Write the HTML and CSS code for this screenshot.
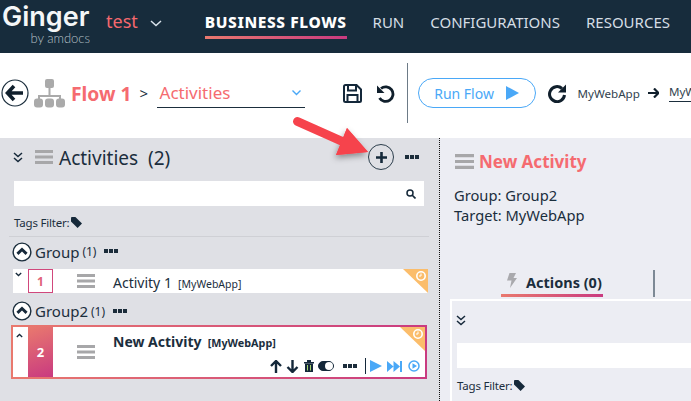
FILE: index.html
```html
<!DOCTYPE html>
<html lang="en">
<head>
<meta charset="utf-8">
<title>Ginger</title>
<link rel="stylesheet" href="styles.css">
</head>
<body>
<svg class="defs" width="0" height="0" aria-hidden="true">
  <defs>
    <symbol id="burger" viewBox="0 0 18 14"><path d="M0 0h18v3H0zM0 5.5h18v3H0zM0 11h18v3H0z" fill="#a7a7a9"/></symbol>
    <symbol id="dchev" viewBox="0 0 10 11"><path d="M1 1l4 3.500L9 1M1 6l4 3.500L9 6" fill="none" stroke="#16293a" stroke-width="1.500"/></symbol>
    <symbol id="dots" viewBox="0 0 14 5"><path d="M0 0h4v4H0zM5 0h4v4H5zM10 0h4v4h-4z" fill="#1c2d3b"/></symbol>
    <symbol id="tag" viewBox="0 0 11 11"><path d="M0 1.200C0 .5.5 0 1.200 0h3.200L11 6.600 6.600 11 0 4.400z" fill="#16293a"/></symbol>
    <symbol id="up" viewBox="0 0 14 14"><circle cx="7" cy="7" r="6.200" fill="#fff" stroke="#1b2e3d" stroke-width="1"/><path d="M3.800 8.300L7 5.200l3.200 3.100" fill="none" stroke="#16293a" stroke-width="2"/></symbol>
    <symbol id="corner" viewBox="0 0 25 24"><path d="M0 0h25v24z" fill="#fbbd6b"/><circle cx="18" cy="7" r="4.200" fill="none" stroke="#fff" stroke-width="1.600"/><path d="M18 4.500V7h-2" fill="none" stroke="#fff"/></symbol>
  </defs>
</svg>
<div class="page">
  <header class="topbar">
    <div class="logo">
      <span class="logo-name">Ginger</span>
      <span class="logo-by">by amdocs</span>
    </div>
    <span class="project">test</span>
    <svg class="project-chev" width="12" height="7" viewBox="0 0 12 7"><path d="M1 1l5 4.500L11 1" fill="none" stroke="#d8e2ea" stroke-width="1.500"/></svg>
    <nav class="nav">
      <a class="nav-item nav-active">BUSINESS FLOWS</a>
      <a class="nav-item">RUN</a>
      <a class="nav-item">CONFIGURATIONS</a>
      <a class="nav-item">RESOURCES</a>
    </nav>
  </header>

  <section class="toolbar">
    <svg class="back" width="28" height="28" viewBox="0 0 28 28"><circle cx="14" cy="14" r="13" fill="#fff" stroke="#1b2e3d" stroke-width="1.200"/><path d="M13 7l-6.500 7 6.500 7M7 14h15" fill="none" stroke="#101f2c" stroke-width="3.600"/></svg>
    <svg class="tree" width="33" height="29" viewBox="0 0 33 29"><path d="M16.500 8v8M6 22v-5h21v5" fill="none" stroke="#aaa" stroke-width="2"/><rect x="12" y="0" width="9" height="9" rx="2" fill="#aaa"/><rect x="1" y="19.500" width="9" height="9" rx="3" fill="#aaa"/><rect x="12" y="19.500" width="9" height="9" rx="3" fill="#aaa"/><rect x="23" y="19.500" width="9" height="9" rx="3" fill="#aaa"/></svg>
    <span class="flow-name">Flow 1</span>
    <span class="crumb">&gt;</span>
    <div class="view-select">
      <span>Activities</span>
      <svg width="9" height="6" viewBox="0 0 9 6"><path d="M.5.500l4 4 4-4" fill="none" stroke="#4aa8f7" stroke-width="1.400"/></svg>
    </div>
    <svg class="save" width="19" height="19" viewBox="0 0 19 19"><path d="M1 2.500C1 1.700 1.700 1 2.500 1h11L18 5.500v11c0 .8-.7 1.500-1.500 1.500h-14C1.700 18 1 17.300 1 16.500z" fill="none" stroke="#14283a" stroke-width="2"/><path d="M5 1.500v5h8v-5M4.500 18v-7h10v7" fill="none" stroke="#14283a" stroke-width="2"/></svg>
    <svg class="undo" width="19" height="19" viewBox="0 0 19 19"><path d="M5 4.500A7.300 7.300 0 1 1 3.500 14" fill="none" stroke="#101f2c" stroke-width="2.800"/><path d="M1 1.500v7.500h7.500z" fill="#101f2c"/></svg>
    <div class="tool-sep"></div>
    <button class="run-btn">Run Flow<svg width="13" height="14" viewBox="0 0 13 14"><path d="M0 0l13 7-13 7z" fill="#4aa8f7"/></svg></button>
    <svg class="redo" width="20" height="20" viewBox="0 0 20 20"><path d="M15 5.500A7.500 7.500 0 1 0 17.500 12" fill="none" stroke="#101f2c" stroke-width="3"/><path d="M19 1.500v8h-8z" fill="#101f2c"/></svg>
    <span class="env">MyWebApp</span>
    <svg class="env-arrow" width="11" height="10" viewBox="0 0 11 10"><path d="M6 .500L10.500 5 6 9.500M0 5h10" fill="none" stroke="#101f2c" stroke-width="2.200"/></svg>
    <span class="env-target">MyWebApp</span>
  </section>

  <main class="workspace">
    <section class="left">
      <div class="left-head">
        <svg class="head-chev" width="10" height="11"><use href="#dchev"/></svg>
        <svg class="head-burger" width="18" height="14"><use href="#burger"/></svg>
        <h1 class="left-title">Activities&nbsp; (2)</h1>
        <button class="add-btn"><svg width="13" height="13" viewBox="0 0 13 13"><path d="M6.500 1v11M1 6.500h11" stroke="#15293a" stroke-width="2.600"/></svg></button>
        <svg class="head-dots" width="14" height="5"><use href="#dots"/></svg>
      </div>
      <div class="search">
        <svg width="10" height="10" viewBox="0 0 10 10"><circle cx="4" cy="4" r="3" fill="none" stroke="#16293a" stroke-width="1.500"/><path d="M6 6l3.500 3.500" stroke="#16293a" stroke-width="1.700"/></svg>
      </div>
      <div class="tags">Tags Filter:<svg width="11" height="11"><use href="#tag"/></svg></div>
      <div class="group-list">
        <div class="group-head group-first">
          <svg width="20" height="20" viewBox="0 0 14 14"><use href="#up"/></svg>
          <span class="group-name">Group</span><span class="group-count">(1)</span>
          <svg class="group-dots" width="14" height="5"><use href="#dots"/></svg>
        </div>
        <article class="activity">
          <svg class="row-chev" width="7" height="5" viewBox="0 0 7 5"><path d="M.8 1l2.700 2.500L6.200 1" fill="none" stroke="#16293a" stroke-width="1.300"/></svg>
          <div class="num">1</div>
          <svg class="row-burger" width="18" height="14"><use href="#burger"/></svg>
          <div class="row-title"><span class="act-name">Activity 1</span> <span class="act-target">[MyWebApp]</span></div>
          <svg class="corner" width="25" height="24"><use href="#corner"/></svg>
        </article>
        <div class="group-head group-second">
          <svg width="20" height="20" viewBox="0 0 14 14"><use href="#up"/></svg>
          <span class="group-name">Group2</span><span class="group-count">(1)</span>
          <svg class="group-dots" width="14" height="5"><use href="#dots"/></svg>
        </div>
        <article class="activity-sel">
          <div class="sel-inner">
            <svg class="sel-chev" width="7" height="5" viewBox="0 0 7 5"><path d="M.8 4l2.700-2.500L6.200 4" fill="none" stroke="#16293a" stroke-width="1.300"/></svg>
            <div class="num-sel">2</div>
            <svg class="sel-burger" width="18" height="14"><use href="#burger"/></svg>
            <div class="sel-body">
              <div class="sel-title"><span class="sel-name">New Activity</span> <span class="sel-target">[MyWebApp]</span></div>
              <div class="sel-tools">
                <svg width="12" height="13" viewBox="0 0 12 13"><path d="M1 6l5-5 5 5M6 2v11" fill="none" stroke="#14283a" stroke-width="2.400"/></svg>
                <svg width="13" height="13" viewBox="0 0 13 13"><path d="M1.500 7l5 5 5-5M6.500 11V0" fill="none" stroke="#14283a" stroke-width="2.400"/></svg>
                <svg class="tool-trash" width="10" height="12" viewBox="0 0 10 12"><path d="M0 2h10v1.500H0zM3 0h4v2H3z" fill="#14283a"/><path d="M1 3.500h8V12H1z" fill="#14283a"/><path d="M3 5h1v5.500H3zM6 5h1v5.500H6z" fill="#a5d36f"/></svg>
                <svg width="16" height="10" viewBox="0 0 16 10"><rect x=".5" y=".5" width="15" height="9" rx="4.500" fill="#14283a" stroke="#14283a"/><circle cx="11" cy="5" r="4" fill="#fff"/></svg>
                <svg class="tool-dots" width="14" height="5"><use href="#dots"/></svg>
                <span class="tool-bar"></span>
                <svg width="12" height="12" viewBox="0 0 12 12"><path d="M0 0l12 6-12 6z" fill="#4aa8f7"/></svg>
                <svg class="tool-ff" width="15" height="11" viewBox="0 0 15 11"><path d="M0 0l6.500 5.500L0 11zM6.500 0L13 5.500 6.500 11zM13 0h2v11h-2z" fill="#4aa8f7"/></svg>
                <svg class="tool-cplay" width="12" height="12" viewBox="0 0 12 12"><circle cx="6" cy="6" r="5" fill="none" stroke="#4aa8f7" stroke-width="1.500"/><path d="M4.500 3.200L9 6l-4.500 2.800z" fill="#4aa8f7"/></svg>
              </div>
            </div>
            <svg class="corner corner-sel" width="25" height="24"><use href="#corner"/></svg>
          </div>
        </article>
      </div>
    </section>
    <section class="right">
      <div class="right-head">
        <svg width="19" height="15" viewBox="0 0 18 14"><use href="#burger"/></svg>
        <h2 class="right-title">New Activity</h2>
      </div>
      <p class="meta">Group: Group2<br>Target: MyWebApp</p>
      <div class="tabs">
        <div class="tab">
          <svg width="10" height="15" viewBox="0 0 10 15"><path d="M2.500 0H9L6.500 5H10L3 15l1.500-7.500H0z" fill="#a9a9ad"/></svg>
          <span>Actions (0)</span>
        </div>
        <span class="tab-sep"></span>
      </div>
      <div class="inner">
        <svg class="inner-chev" width="10" height="11"><use href="#dchev"/></svg>
        <div class="inner-search"></div>
        <div class="inner-tags">Tags Filter:<svg width="11" height="11"><use href="#tag"/></svg></div>
      </div>
    </section>
  </main>

  <svg class="callout" width="110" height="60" viewBox="0 0 110 60">
    <defs><filter id="sh" x="-20%" y="-20%" width="150%" height="160%"><feDropShadow dx="-1" dy="3" stdDeviation="3" flood-color="#000" flood-opacity=".4"/></filter></defs>
    <path d="M7.500 9.500L58 32M57 16l21 24-32 3z" fill="#f6434c" stroke="#f6434c" stroke-width="0" filter="url(#sh)"/>
    <path d="M7.500 9.500L58 32" stroke="#f6434c" stroke-width="9" stroke-linecap="round"/>
    <path d="M57 16l21 24-32 3z" fill="#f6434c"/>
  </svg>
</div>
</body>
</html>
```
FILE: styles.css
```css
* { box-sizing: border-box; }
html, body { margin: 0; padding: 0; }
body { font-family: "Noto Sans", "Open Sans", sans-serif; color: #1b2e3d; background: #fff; }
.defs { position: absolute; }
.page { position: relative; width: 691px; height: 401px; overflow: hidden; }
svg { display: block; flex: none; }

.topbar { height: 53px; background: #172c3c; display: flex; align-items: flex-start; padding-left: 2px; overflow: hidden; }
.logo { width: 88px; flex: none; display: flex; flex-direction: column; align-items: flex-end; }
.logo-name { font-family: "Inter", sans-serif; font-weight: 600; font-size: 27px; line-height: 28px; margin-top: 3px; color: #f4f6f7; width: 100%; white-space: nowrap; }
.logo-by { font-family: "Lato", sans-serif; font-weight: 300; font-size: 13px; line-height: 13px; color: #b6c0c7; margin-top: 1px; white-space: nowrap; }
.project { font-size: 18px; line-height: 24px; color: #f4686e; margin: 9px 0 0 16px; }
.project-chev { margin: 20px 0 0 12px; }
.nav { display: flex; margin-left: 43px; gap: 26px; flex: none; }
.nav-item { display: block; font-size: 15px; line-height: 20px; padding-top: 12px; height: 39px; color: #d5dee5; white-space: nowrap; }
.nav-active { font-weight: 800; font-size: 15.500px; color: #fff; letter-spacing: .6px; border-bottom: 3px solid; border-image: linear-gradient(90deg, #e9796e, #c93a80) 1; }

.toolbar { height: 85px; background: #fff; display: flex; align-items: center; padding: 0 0 5px 1px; overflow: hidden; }
.toolbar > * { flex: none; }
.tree { margin-left: 4px; }
.flow-name { font-size: 19.300px; font-weight: 700; color: #f56b70; margin-left: 5px; white-space: nowrap; }
.crumb { font-size: 15px; margin-left: 8px; width: 8px; }
.view-select { width: 148px; height: 30px; margin-left: 9px; padding: 0 4px 0 3px; border-bottom: 1px solid #1b2e3d; display: flex; align-items: center; justify-content: space-between; font-size: 17px; line-height: 24px; color: #f56b70; }
.save { margin-left: 38px; }
.undo { margin-left: 14px; }
.tool-sep { width: 1px; height: 60px; background: #6d7b87; margin-left: 12px; }
.run-btn { width: 118px; height: 30px; margin-left: 10px; background: #fff; border: 1px solid #4aa8f7; border-radius: 15px; display: flex; align-items: center; justify-content: center; gap: 12px; padding: 0; font: 14px "Noto Sans", sans-serif; color: #4aa8f7; }
.redo { margin-left: 11px; }
.env { font-size: 11.600px; margin-left: 11px; color: #33434f; }
.env-arrow { margin-left: 8px; }
.env-target { font-size: 11.600px; margin-left: 10px; padding-bottom: 2px; border-bottom: 1px solid #1b2e3d; color: #33434f; }

.workspace { height: 263px; display: flex; }
.left { width: 440px; flex: none; background: #dfe0e5; border-right: 1px dotted #111; }
.left-head { display: flex; align-items: center; height: 36px; margin-top: 1px; padding-left: 13px; }
.head-burger { margin-left: 12px; }
.left-title { font-size: 19px; font-weight: 400; margin: 2px 0 0 6px; width: 310px; white-space: nowrap; }
.add-btn { width: 26px; height: 26px; border: 1px solid #2c3e4c; border-radius: 50%; background: transparent; padding: 0; display: flex; align-items: center; justify-content: center; margin-left: -1px; }
.head-dots { margin-left: 11px; }
.search { height: 25px; margin: 6px 15px 0 14px; background: #fff; display: flex; align-items: center; justify-content: flex-end; padding-right: 8px; }
.tags { display: flex; align-items: center; gap: 2px; height: 31px; margin: 0 10px 0 9px; padding: 3px 0 0 5px; border-bottom: 1px solid #cfd0d5; font-size: 11.500px; letter-spacing: -.2px; }
.group-list { padding-left: 12px; }
.group-head { display: flex; align-items: center; height: 32px; }
.group-first { padding-bottom: 3px; }
.group-second { padding-top: 4px; }
.group-name { font-size: 15px; margin-left: 3px; }
.group-count { font-size: 12px; margin-left: 3px; }
.group-dots { margin-left: 8px; }
.activity { position: relative; width: 415px; height: 24px; margin-left: 1px; background: #fff; display: flex; align-items: center; }
.row-chev { margin: -13px 0 0 2px; }
.num { width: 25px; height: 24px; margin-left: 6px; border: 1px solid #d1477c; display: flex; align-items: center; justify-content: center; font-size: 12px; font-weight: 700; color: #e0637a; }
.row-burger { margin-left: 24px; }
.row-title { margin-left: 18px; white-space: nowrap; padding-top: 1px; }
.act-name { font-size: 14px; }
.act-target { font-size: 10.500px; margin-left: 2px; }
.corner { position: absolute; top: 0; right: 0; }
.activity-sel { width: 416px; height: 54px; margin-left: -1px; padding: 2px; background: linear-gradient(90deg, #e9796e, #c93a80); }
.sel-inner { position: relative; height: 50px; background: #fff; display: flex; align-items: stretch; }
.sel-chev { margin: 6px 0 0 3px; }
.num-sel { width: 25px; margin-left: 5px; background: linear-gradient(160deg, #e9796e, #c93a80); display: flex; align-items: center; justify-content: center; color: #fff; font-size: 13px; font-weight: 700; }
.sel-burger { margin: 18px 0 0 24px; }
.sel-body { margin-left: 18px; flex: 1; display: flex; flex-direction: column; }
.sel-title { white-space: nowrap; line-height: 22px; margin-top: 3px; }
.sel-name { font-size: 14px; font-weight: 700; }
.sel-target { font-size: 10.800px; font-weight: 700; margin-left: 2px; }
.sel-tools { display: flex; align-items: center; gap: 4px; margin: 3px 0 0 157px; height: 18px; }
.tool-trash { margin-left: 1px; }
.tool-dots { margin: 0 4px 0 5px; }
.tool-bar { width: 1px; height: 16px; background: #14283a; }
.tool-ff { margin-left: 1px; }
.tool-cplay { margin-left: 2px; }
.corner-sel { right: 0; }

.right { flex: 1; min-width: 0; background: #ecedf3; }
.right-head { display: flex; align-items: center; gap: 5px; height: 24px; margin-top: 11px; padding-left: 15px; }
.right-title { font-size: 17px; font-weight: 700; margin: 0; color: #f56b70; white-space: nowrap; }
.meta { margin: 12px 0 0 14px; font-size: 14.700px; line-height: 20px; white-space: nowrap; }
.tabs { display: flex; align-items: flex-end; height: 28px; margin-top: 44px; padding-left: 61px; }
.tab { width: 102px; height: 25px; display: flex; align-items: flex-start; gap: 9px; padding: 1px 0 0 6px; border-bottom: 3px solid; border-image: linear-gradient(90deg, #e9796e, #c93a80) 1; font-size: 14.500px; line-height: 18px; font-weight: 700; white-space: nowrap; }
.tab-sep { width: 2px; height: 27px; background: #7d8995; margin: 0 0 0 50px; }
.inner { margin: 2px 0 0 10px; height: 110px; border: solid #fff; border-width: 2px 0 0 2px; padding: 14px 0 0 4px; }
.inner-search { height: 25px; margin: 17px 0 0 1px; background: #fff; }
.inner-tags { display: flex; align-items: center; gap: 2px; height: 28px; margin: 3px 0 0 1px; font-size: 11.500px; letter-spacing: -.2px; }

.callout { position: absolute; left: 290px; top: 112px; }
```
